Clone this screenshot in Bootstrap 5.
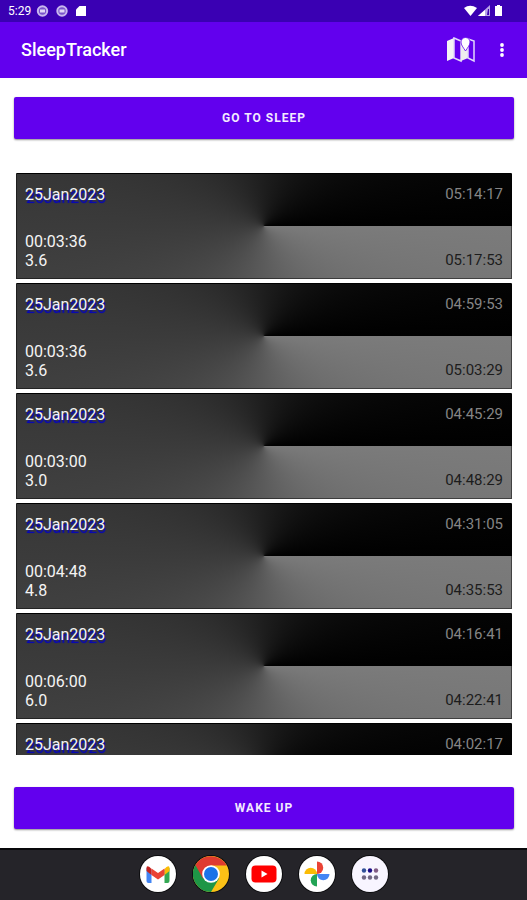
<!DOCTYPE html>
<html lang="en">
<head>
<meta charset="utf-8">
<meta name="viewport" content="width=device-width, initial-scale=1">
<title>SleepTracker</title>
<link href="https://cdn.jsdelivr.net/npm/bootstrap@5.3.0/dist/css/bootstrap.min.css" rel="stylesheet">
<style>
body { font-family: Roboto, "Liberation Sans", sans-serif; background: #fff; }
.status-bar { height: 22px; background: #3a00b3; font-size: 12px; line-height: 22px; }
.app-bar { height: 56px; background: #6200ee; padding: 0 20px 0 21px; }
.app-title { font-size: 18px; line-height: 24px; font-weight: 500; }
.icon-btn { background: none; border: 0; padding: 0; color: #fff; display: flex; }
.more-btn { margin-left: 21px; }
.screen { padding: 19px 13px 19px 14px; min-height: 0; }
.action-btn { height: 42px; flex-shrink: 0; font-size: 12px; font-weight: 700; letter-spacing: 1px; color: #f3eaff; background: #6200ee; border: 0; border-radius: 2px; box-shadow: 0 1px 2px rgba(0,0,0,.45); }
.action-btn:hover { background: #5500d4; color: #fff; }
.sleep-list { margin: 34px 2px 32px; gap: 4px; min-height: 0; font-size: 16px; line-height: 19px; }
.sleep-item { height: 106px; flex-shrink: 0; padding: 11px 8px 8px; border: 1px solid rgba(0,0,0,.45); border-top-color: #000; background: conic-gradient(from 90deg, #7b7b7b, #3b3b3b 50%, #000) border-box; color: #f4f4f4; }
.sleep-date { text-shadow: 1px 3px 1px #0000c8; }
.start-time, .end-time { font-size: 15px; }
.start-time { color: #858585; }
.end-time { color: #1c1c1c; }
.dock { height: 52px; gap: 17px; padding-bottom: 2px; background: #252429; border-top: 2px solid #08080a; }
.dock a { display: flex; border-radius: 50%; box-shadow: 0 0 0 1px #0c0c0e; }
</style>
</head>
<body class="vh-100 d-flex flex-column overflow-hidden">
<div class="status-bar d-flex align-items-center text-white flex-shrink-0 ps-2">
  <span>5:29</span>
  <svg class="ms-1" width="51" height="14" viewBox="0 0 51 14" aria-hidden="true"><g fill="#7a52cc" stroke="#c9b8ee" stroke-width="2"><circle cx="7.500" cy="7" r="4.700"/><circle cx="27" cy="7" r="4.700"/></g><g fill="#e0d6f6"><path d="M5 5.500h5v3H5zM24.500 5.500h5v3h-5z"/></g><path d="M44.500 2H51.500v10H41V5.500z" fill="#fff"/></svg>
  <svg class="ms-auto me-4" width="40" height="14" viewBox="0 0 40 14" aria-hidden="true"><path d="M1 4Q7-.500 14 4L7.500 12z" fill="#fff"/><path d="M27 1v11H15z" fill="#b7a3e8"/><path d="M22 6v6h-7z" fill="#fff"/><path d="M25 5h1v6h-2z" fill="#3a00b3"/><path d="M34 1h3v1h2v10h-7V2h2z" fill="#fff"/></svg>
</div>
<header class="app-bar d-flex align-items-center text-white flex-shrink-0">
  <h1 class="app-title m-0 me-auto">SleepTracker</h1>
  <button type="button" class="icon-btn" aria-label="Map"><svg width="30" height="26" viewBox="0 0 30 26"><path d="M1 4l7-3v20l-7 3z" fill="#f4f4f4"/><path d="M8 1l7 3v20l-7-3z" fill="#6200ee" stroke="#e2d6fb" stroke-width="1.500"/><path d="M15 4l7-3v20l-7 3z" fill="#eee"/><path d="M22 2l6 2v20l-6-3z" fill="#6200ee" stroke="#e2d6fb" stroke-width="1.500"/><path d="M19.500 14C17 10 15 8 15 5a4.500 4.500 0 0 1 9 0c0 3-2 5-4.500 9z" fill="#fff" stroke="#6200ee" stroke-width=".8"/></svg></button>
  <button type="button" class="icon-btn more-btn" aria-label="More options"><svg width="10" height="18" viewBox="0 0 10 18" fill="#fff"><circle cx="5" cy="4" r="1.900"/><circle cx="5" cy="9" r="1.900"/><circle cx="5" cy="14" r="1.900"/></svg></button>
</header>
<main class="screen d-flex flex-column flex-grow-1">
  <button type="button" class="action-btn btn w-100">GO TO SLEEP</button>
  <ul class="sleep-list list-unstyled d-flex flex-column flex-grow-1 overflow-hidden">
    <li class="sleep-item d-flex justify-content-between"><div class="d-flex flex-column"><span class="sleep-date mb-auto">25Jan2023</span><span>00:03:36</span><span>3.6</span></div><div class="d-flex flex-column justify-content-between"><span class="start-time">05:14:17</span><span class="end-time">05:17:53</span></div></li>
    <li class="sleep-item d-flex justify-content-between"><div class="d-flex flex-column"><span class="sleep-date mb-auto">25Jan2023</span><span>00:03:36</span><span>3.6</span></div><div class="d-flex flex-column justify-content-between"><span class="start-time">04:59:53</span><span class="end-time">05:03:29</span></div></li>
    <li class="sleep-item d-flex justify-content-between"><div class="d-flex flex-column"><span class="sleep-date mb-auto">25Jan2023</span><span>00:03:00</span><span>3.0</span></div><div class="d-flex flex-column justify-content-between"><span class="start-time">04:45:29</span><span class="end-time">04:48:29</span></div></li>
    <li class="sleep-item d-flex justify-content-between"><div class="d-flex flex-column"><span class="sleep-date mb-auto">25Jan2023</span><span>00:04:48</span><span>4.8</span></div><div class="d-flex flex-column justify-content-between"><span class="start-time">04:31:05</span><span class="end-time">04:35:53</span></div></li>
    <li class="sleep-item d-flex justify-content-between"><div class="d-flex flex-column"><span class="sleep-date mb-auto">25Jan2023</span><span>00:06:00</span><span>6.0</span></div><div class="d-flex flex-column justify-content-between"><span class="start-time">04:16:41</span><span class="end-time">04:22:41</span></div></li>
    <li class="sleep-item d-flex justify-content-between"><div class="d-flex flex-column"><span class="sleep-date mb-auto">25Jan2023</span></div><div class="d-flex flex-column"><span class="start-time">04:02:17</span></div></li>
  </ul>
  <button type="button" class="action-btn btn w-100">WAKE UP</button>
</main>
<nav class="dock d-flex align-items-center justify-content-center flex-shrink-0" aria-label="Dock">
  <a href="#" aria-label="Gmail"><svg width="36" height="36" viewBox="0 0 36 36"><circle cx="18" cy="18" r="18" fill="#fff"/><path d="M6.500 12v13q0 2 2 2h3V14z" fill="#4285f4"/><path d="M29.500 12v13q0 2-2 2h-3V14z" fill="#34a853"/><path d="M24.500 13l2-2q3-2 3 1v3l-5 4z" fill="#fbbc04"/><path d="M11.500 13l-2-2q-3-2-3 1v3l5 4z" fill="#c5221f"/><path d="M11.500 12.500L18 17l6.500-4.500V19L18 23.500 11.500 19z" fill="#ea4335"/></svg></a>
  <a href="#" aria-label="Chrome"><svg width="36" height="36" viewBox="0 0 36 36"><circle cx="18" cy="18" r="18" fill="#fbc116"/><path d="M18 18L2.400 9A18 18 0 0 0 18 36l8-13.500z" fill="#1e9646"/><path d="M18 18L10 22.500 2.400 9A18 18 0 0 1 33.600 9.500H18z" fill="#df3b2f"/><circle cx="18" cy="18" r="8.800" fill="#fff"/><circle cx="18" cy="18" r="7" fill="#1a73e8"/></svg></a>
  <a href="#" aria-label="YouTube"><svg width="36" height="36" viewBox="0 0 36 36"><circle cx="18" cy="18" r="18" fill="#fff"/><rect x="5.500" y="9.500" width="25" height="17" rx="4" fill="#f00"/><path d="M15.500 14.500v7l6-3.500z" fill="#fff"/></svg></a>
  <a href="#" aria-label="Photos"><svg width="36" height="36" viewBox="0 0 36 36"><circle cx="18" cy="18" r="18" fill="#fff"/><path d="M18 18V5.500a6.200 6.200 0 0 1 0 12.500z" fill="#ea4335"/><path d="M18 18h12.500a6.200 6.200 0 0 1-12.500 0z" fill="#4285f4"/><path d="M18 18v12.500a6.200 6.200 0 0 1 0-12.500z" fill="#23a455"/><path d="M18 18H5.500a6.200 6.200 0 0 1 12.500 0z" fill="#fbbc04"/></svg></a>
  <a href="#" aria-label="All apps"><svg width="36" height="36" viewBox="0 0 36 36"><circle cx="18" cy="18" r="18" fill="#f8f5ff"/><g fill="#716783"><circle cx="12" cy="14.500" r="2.200" fill="#305098"/><circle cx="18" cy="14.500" r="2.200" fill="#1a0c86"/><circle cx="24" cy="14.500" r="2.200" fill="#805b84"/><circle cx="12" cy="21.500" r="2.200"/><circle cx="18" cy="21.500" r="2.200"/><circle cx="24" cy="21.500" r="2.200"/></g></svg></a>
</nav>
<script src="https://cdn.jsdelivr.net/npm/bootstrap@5.3.0/dist/js/bootstrap.bundle.min.js"></script>
</body>
</html>
